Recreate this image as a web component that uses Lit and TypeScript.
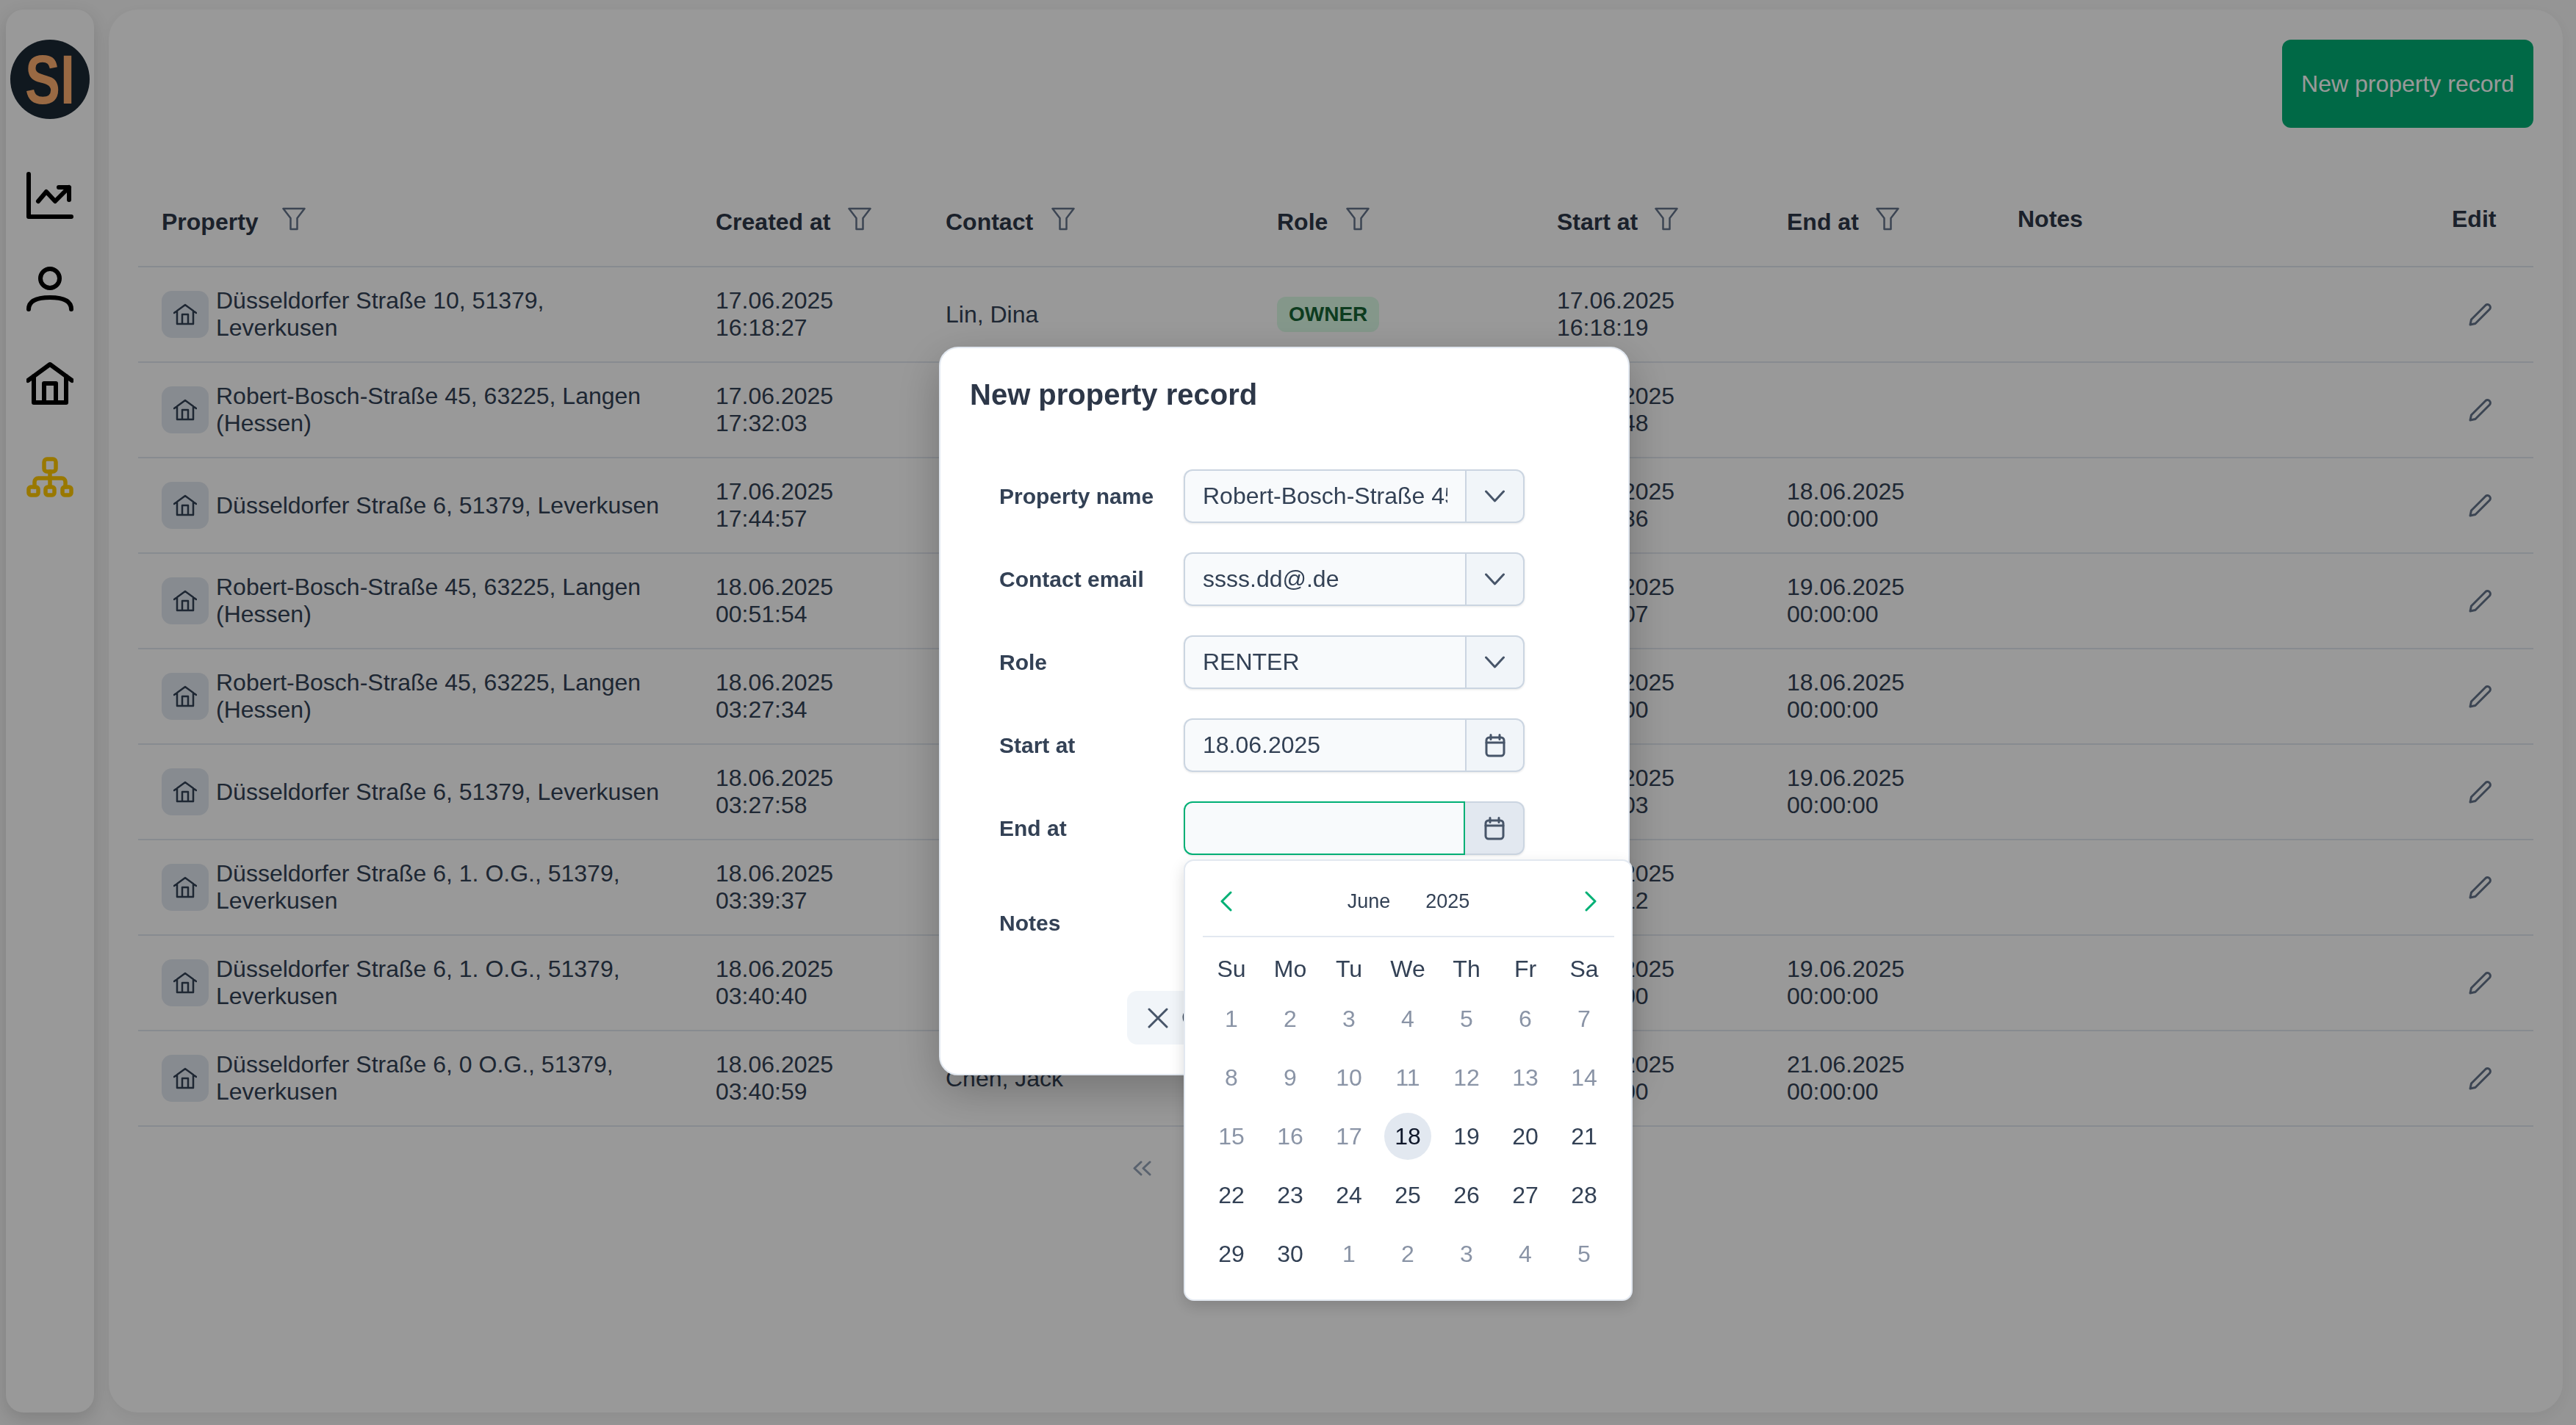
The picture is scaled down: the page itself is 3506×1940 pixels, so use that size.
import { LitElement, html, css, svg } from 'lit';
import { customElement } from 'lit/decorators.js';

interface RecordRow {
  property: string;
  created: [string, string];
  contact?: string;
  role?: string;
  start: [string, string];
  end?: [string, string];
}

const DUS6 = 'Düsseldorfer Straße 6, 51379, Leverkusen';
const DUS6_1 = 'Düsseldorfer Straße 6, 1. O.G., 51379, Leverkusen';
const BOSCH = 'Robert-Bosch-Straße 45, 63225, Langen (Hessen)';

const ROWS: RecordRow[] = [
  {
    property: 'Düsseldorfer Straße 10, 51379, Leverkusen',
    created: ['17.06.2025', '16:18:27'],
    contact: 'Lin, Dina',
    role: 'OWNER',
    start: ['17.06.2025', '16:18:19'],
  },
  { property: BOSCH, created: ['17.06.2025', '17:32:03'], start: ['17.06.2025', '17:31:48'] },
  {
    property: DUS6,
    created: ['17.06.2025', '17:44:57'],
    start: ['17.06.2025', '17:44:36'],
    end: ['18.06.2025', '00:00:00'],
  },
  {
    property: BOSCH,
    created: ['18.06.2025', '00:51:54'],
    start: ['18.06.2025', '00:51:07'],
    end: ['19.06.2025', '00:00:00'],
  },
  {
    property: BOSCH,
    created: ['18.06.2025', '03:27:34'],
    start: ['18.06.2025', '03:27:00'],
    end: ['18.06.2025', '00:00:00'],
  },
  {
    property: DUS6,
    created: ['18.06.2025', '03:27:58'],
    start: ['18.06.2025', '03:27:03'],
    end: ['19.06.2025', '00:00:00'],
  },
  { property: DUS6_1, created: ['18.06.2025', '03:39:37'], start: ['18.06.2025', '03:39:12'] },
  {
    property: DUS6_1,
    created: ['18.06.2025', '03:40:40'],
    start: ['18.06.2025', '03:40:00'],
    end: ['19.06.2025', '00:00:00'],
  },
  {
    property: 'Düsseldorfer Straße 6, 0 O.G., 51379, Leverkusen',
    created: ['18.06.2025', '03:40:59'],
    contact: 'Chen, Jack',
    start: ['18.06.2025', '03:40:00'],
    end: ['21.06.2025', '00:00:00'],
  },
];

const WEEKDAYS = ['Su', 'Mo', 'Tu', 'We', 'Th', 'Fr', 'Sa'];
const DAYS = [
  ...Array.from({ length: 35 }, (_, i) => (i < 30 ? i + 1 : i - 29)),
];

const homePaths = svg`<path d="M2 28 32 6l30 22M10 22v36h44V22M24 58V32h16v26" />`;

const homeIcon = (cls: string) => html`<svg class=${cls} viewBox="0 0 64 64" fill="none" stroke="currentColor" stroke-linecap="round" stroke-linejoin="round">${homePaths}</svg>`;

const filterIcon = html`<svg class="filter" viewBox="0 0 32 32" fill="none" stroke="currentColor" stroke-width="2.5" stroke-linejoin="round"><path d="M1.5 2h29L20.5 15v15h-9V15z" /></svg>`;

const chevronDown = html`<svg class="addon-icon chev" viewBox="0 0 27 17" fill="none" stroke="currentColor" stroke-width="3" stroke-linecap="round" stroke-linejoin="round"><path d="M1.5 2 13.5 15 25.5 2" /></svg>`;

const calendarIcon = html`<svg class="addon-icon cal" viewBox="0 0 28 32" fill="none" stroke="currentColor" stroke-width="3" stroke-linecap="round" stroke-linejoin="round"><rect x="2" y="5" width="24" height="25" rx="4" /><path d="M8 1.5v6M20 1.5v6M2 12h24" /></svg>`;

@customElement('app-root')
export class AppRoot extends LitElement {
  static styles = css`
    :host {
      display: flex;
      box-sizing: border-box;
      width: 3506px;
      height: 1940px;
      padding: 13px 18px 17px 8px;
      background: #f8f8f8;
      font-family: 'Liberation Sans', Arial, sans-serif;
      font-size: 32px;
      color: #334155;
    }

    .sidebar {
      width: 120px;
      flex: none;
      display: flex;
      flex-direction: column;
      align-items: center;
      padding-top: 41px;
      box-sizing: border-box;
      background: #fff;
      border-radius: 24px;
      box-shadow: 0 8px 24px rgba(0, 0, 0, 0.14);
    }

    .logo {
      width: 108px;
      height: 108px;
      margin-bottom: 72px;
    }

    .logo text {
      font-family: 'Liberation Sans', Arial, sans-serif;
      font-weight: 700;
      font-size: 94px;
      fill: #ffb070;
    }

    .nav {
      display: flex;
      flex-direction: column;
      gap: 64px;
    }

    .nav-icon {
      display: block;
      width: 64px;
      height: 64px;
      color: #000;
      stroke-width: 6;
    }

    .nav-icon.active {
      color: #ffc800;
      stroke-width: 5.5;
    }

    .main {
      flex: 1;
      margin-left: 20px;
      padding: 41px 40px 0;
      background: #fff;
      border-radius: 40px;
      box-shadow: 0 6px 18px rgba(0, 0, 0, 0.05);
    }

    .toolbar {
      display: flex;
      justify-content: flex-end;
      margin-bottom: 60px;
    }

    .primary {
      width: 342px;
      height: 120px;
      border: none;
      border-radius: 12px;
      background: #00af75;
      color: #fff;
      font: inherit;
    }

    .row {
      display: grid;
      grid-template-columns: 754px 313px 451px 381px 313px 314px 591px 143px;
      height: 130px;
      box-sizing: border-box;
      border-bottom: 2px solid #e2e8f0;
      align-items: center;
    }

    .row > div {
      padding-left: 32px;
      min-width: 0;
    }

    .head {
      font-weight: 700;
      color: #2d3748;
    }

    .head-cell {
      display: flex;
      align-items: center;
      gap: 23px;
    }

    .head-cell.wide {
      gap: 32px;
    }

    .head-cell.mid {
      gap: 25px;
    }

    .head-cell span {
      margin-top: 9px;
    }

    .filter {
      width: 32px;
      height: 32px;
      color: #64748b;
      flex: none;
    }

    .property {
      display: flex;
      align-items: center;
      gap: 10px;
      padding-right: 32px;
    }

    .home-box {
      width: 64px;
      height: 64px;
      flex: none;
      display: flex;
      align-items: center;
      justify-content: center;
      border-radius: 14px;
      background: #e2e8f0;
    }

    .home-icon {
      width: 32px;
      height: 32px;
      stroke-width: 5;
    }

    .badge {
      display: inline-block;
      padding: 8px 16px;
      border-radius: 12px;
      background: #dcfce7;
      color: #166534;
      font-size: 28px;
      line-height: 32px;
      font-weight: 700;
    }

    .pencil {
      display: block;
      width: 32px;
      height: 32px;
      margin-left: 23px;
      color: #64748b;
    }

    .pager {
      display: flex;
      padding: 46px 0 0 1354px;
    }

    .pager svg {
      width: 25px;
      height: 21px;
      color: #94a3b8;
    }

    .overlay {
      position: fixed;
      inset: 0;
      background: rgba(0, 0, 0, 0.4);
    }

    .modal {
      position: absolute;
      left: 1278px;
      top: 472px;
      width: 940px;
      height: 992px;
      box-sizing: border-box;
      padding: 40px;
      background: #fff;
      border: 2px solid #e2e8f0;
      border-radius: 26px;
      box-shadow: 0 20px 60px rgba(0, 0, 0, 0.25);
    }

    .modal h2 {
      margin: 0 0 79px;
      font-size: 40px;
      line-height: 46px;
      font-weight: 700;
      color: #2d3748;
    }

    .form {
      display: flex;
      flex-direction: column;
      gap: 40px;
      margin-left: 40px;
    }

    .form-row {
      display: flex;
      align-items: center;
    }

    .form-row label {
      width: 251px;
      flex: none;
      font-size: 30px;
      font-weight: 700;
    }

    .field {
      position: relative;
      display: flex;
      width: 464px;
      height: 73px;
      border-radius: 12px;
      box-shadow: 0 1px 3px rgba(0, 0, 0, 0.1);
    }

    .field input {
      width: 383px;
      flex: none;
      box-sizing: border-box;
      padding: 0 24px;
      border: 2px solid #cbd5e1;
      border-right: none;
      border-radius: 12px 0 0 12px;
      background: #f8fafc;
      color: #334155;
      font: inherit;
      outline: none;
    }

    .field .addon {
      flex: 1;
      display: flex;
      align-items: center;
      justify-content: center;
      box-sizing: border-box;
      border: 2px solid #cbd5e1;
      border-radius: 0 12px 12px 0;
      background: #f1f5f9;
    }

    .field.focus input {
      border: 2px solid #00b075;
      border-radius: 12px 0 0 12px;
    }

    .field.focus .addon {
      border-left: none;
      background: #e2e8f0;
    }

    .addon-icon {
      color: #475569;
    }

    .addon-icon.chev {
      width: 27px;
      height: 17px;
    }

    .addon-icon.cal {
      width: 28px;
      height: 32px;
    }

    .notes {
      width: 464px;
      height: 106px;
      box-sizing: border-box;
      border: 2px solid #cbd5e1;
      border-radius: 12px;
      background: #f8fafc;
      resize: none;
      font: inherit;
    }

    .footer {
      display: flex;
      gap: 16px;
      margin: 39px 0 0 214px;
    }

    .btn {
      display: flex;
      align-items: center;
      gap: 18px;
      height: 73px;
      padding: 0 28px;
      border: none;
      border-radius: 14px;
      background: #f1f5f9;
      color: #334155;
      font: inherit;
    }

    .btn svg {
      width: 28px;
      height: 28px;
      color: #475569;
    }

    .calendar {
      position: absolute;
      top: 79px;
      left: 0;
      width: 611px;
      height: 601px;
      box-sizing: border-box;
      padding: 0 23px 0 22px;
      background: #fff;
      border: 2px solid #e2e8f0;
      border-radius: 14px;
      box-shadow: 0 8px 20px rgba(0, 0, 0, 0.15);
    }

    .cal-head {
      display: flex;
      align-items: center;
      justify-content: space-between;
      height: 40px;
      padding: 35px 24px 27px;
      margin: 0 0 11px 2px;
      width: 512px;
      border-bottom: 2px solid #e2e8f0;
    }

    .cal-head svg {
      width: 16px;
      height: 28px;
      color: #00b075;
    }

    .cal-title {
      display: flex;
      gap: 48px;
      font-size: 27px;
    }

    .grid {
      display: grid;
      grid-template-columns: repeat(7, 64px);
      gap: 16px;
      padding-left: 9px;
    }

    .grid div {
      height: 64px;
      display: flex;
      align-items: center;
      justify-content: center;
      border-radius: 50%;
    }

    .weekdays {
      margin-bottom: 4px;
    }

    .day.muted {
      color: #8a94a6;
    }

    .day.selected {
      background: #e2e8f0;
      color: #0f172a;
    }
  `;

  private renderSidebar() {
    return html`
      <aside class="sidebar">
        <svg class="logo" viewBox="0 0 108 108">
          <circle cx="54" cy="54" r="54" fill="#1b2835" />
          <text x="20" y="87" textLength="68" lengthAdjust="spacingAndGlyphs">SI</text>
        </svg>
        <nav class="nav">
          <svg class="nav-icon" viewBox="0 0 64 64" fill="none" stroke="currentColor" stroke-linecap="round" stroke-linejoin="round">
            <path d="M3 3v58h58M16 40l11-13 12 13 19-19M44 21h14v17" />
          </svg>
          <svg class="nav-icon" viewBox="0 0 64 64" fill="none" stroke="currentColor" stroke-linecap="round" stroke-linejoin="round">
            <circle cx="32" cy="17" r="13" />
            <path d="M3 59c0-12 13-16 29-16s29 4 29 16" />
          </svg>
          ${homeIcon('nav-icon')}
          <svg class="nav-icon active" viewBox="0 0 64 64" fill="none" stroke="currentColor" stroke-linecap="round" stroke-linejoin="round">
            <rect x="24" y="7" width="16" height="17" rx="4" />
            <path d="M32 24v19M11 45v-7a5 5 0 0 1 5-5h32a5 5 0 0 1 5 5v7" />
            <rect x="3" y="45" width="13" height="11" rx="3" />
            <rect x="26" y="45" width="12" height="11" rx="3" />
            <rect x="49" y="45" width="12" height="11" rx="3" />
          </svg>
        </nav>
      </aside>
    `;
  }

  private renderTable() {
    const two = (lines?: [string, string]) =>
      lines ? html`${lines[0]}<br />${lines[1]}` : '';
    return html`
      <div class="row head">
        <div class="head-cell wide"><span>Property</span>${filterIcon}</div>
        <div class="head-cell"><span>Created at</span>${filterIcon}</div>
        <div class="head-cell mid"><span>Contact</span>${filterIcon}</div>
        <div class="head-cell mid"><span>Role</span>${filterIcon}</div>
        <div class="head-cell"><span>Start at</span>${filterIcon}</div>
        <div class="head-cell"><span>End at</span>${filterIcon}</div>
        <div>Notes</div>
        <div>Edit</div>
      </div>
      ${ROWS.map(
        (row) => html`
          <div class="row">
            <div class="property">
              <span class="home-box">${homeIcon('home-icon')}</span>
              <span>${row.property}</span>
            </div>
            <div>${two(row.created)}</div>
            <div>${row.contact ?? ''}</div>
            <div>${row.role ? html`<span class="badge">${row.role}</span>` : ''}</div>
            <div>${two(row.start)}</div>
            <div>${two(row.end)}</div>
            <div></div>
            <div>
              <svg class="pencil" viewBox="0 0 32 32" fill="none" stroke="currentColor" stroke-width="3" stroke-linejoin="round">
                <path d="M2 30l1.5-7L23 3.5a3.9 3.9 0 0 1 5.5 5.5L9 28.5z" />
              </svg>
            </div>
          </div>
        `
      )}
      <div class="pager">
        <svg viewBox="0 0 25 21" fill="none" stroke="currentColor" stroke-width="3" stroke-linecap="round" stroke-linejoin="round">
          <path d="M11 2 2 10.5 11 19M23 2 14 10.5 23 19" />
        </svg>
      </div>
    `;
  }

  private renderCalendar() {
    return html`
      <div class="calendar">
        <div class="cal-head">
          <svg viewBox="0 0 16 28" fill="none" stroke="currentColor" stroke-width="3" stroke-linecap="round" stroke-linejoin="round">
            <path d="M14 2 2 14l12 12" />
          </svg>
          <div class="cal-title"><span>June</span><span>2025</span></div>
          <svg viewBox="0 0 16 28" fill="none" stroke="currentColor" stroke-width="3" stroke-linecap="round" stroke-linejoin="round">
            <path d="M2 2l12 12L2 26" />
          </svg>
        </div>
        <div class="grid weekdays">
          ${WEEKDAYS.map((d) => html`<div>${d}</div>`)}
        </div>
        <div class="grid">
          ${DAYS.map((d, i) => {
            const muted = i < 17 || i >= 30;
            const selected = i === 17;
            return html`<div class="day ${muted ? 'muted' : ''} ${selected ? 'selected' : ''}">${d}</div>`;
          })}
        </div>
      </div>
    `;
  }

  private renderModal() {
    const field = (value: string, icon: unknown, focus = false, extra: unknown = '') => html`
      <div class="field ${focus ? 'focus' : ''}">
        <input readonly value=${value} />
        <div class="addon">${icon}</div>
        ${extra}
      </div>
    `;
    return html`
      <div class="overlay">
        <div class="modal">
          <h2>New property record</h2>
          <div class="form">
            <div class="form-row">
              <label>Property name</label>
              ${field('Robert-Bosch-Straße 45, 63225, Langen (Hessen)', chevronDown)}
            </div>
            <div class="form-row">
              <label>Contact email</label>
              ${field('ssss.dd@.de', chevronDown)}
            </div>
            <div class="form-row">
              <label>Role</label>
              ${field('RENTER', chevronDown)}
            </div>
            <div class="form-row">
              <label>Start at</label>
              ${field('18.06.2025', calendarIcon)}
            </div>
            <div class="form-row">
              <label>End at</label>
              ${field('', calendarIcon, true, this.renderCalendar())}
            </div>
            <div class="form-row">
              <label>Notes</label>
              <textarea class="notes"></textarea>
            </div>
          </div>
          <div class="footer">
            <button class="btn">
              <svg viewBox="0 0 28 28" fill="none" stroke="currentColor" stroke-width="3" stroke-linecap="round">
                <path d="M2 2l24 24M26 2 2 26" />
              </svg>
              Cancel
            </button>
          </div>
        </div>
      </div>
    `;
  }

  render() {
    return html`
      ${this.renderSidebar()}
      <main class="main">
        <div class="toolbar">
          <button class="primary">New property record</button>
        </div>
        ${this.renderTable()}
      </main>
      ${this.renderModal()}
    `;
  }
}

declare global {
  interface HTMLElementTagNameMap {
    'app-root': AppRoot;
  }
}
